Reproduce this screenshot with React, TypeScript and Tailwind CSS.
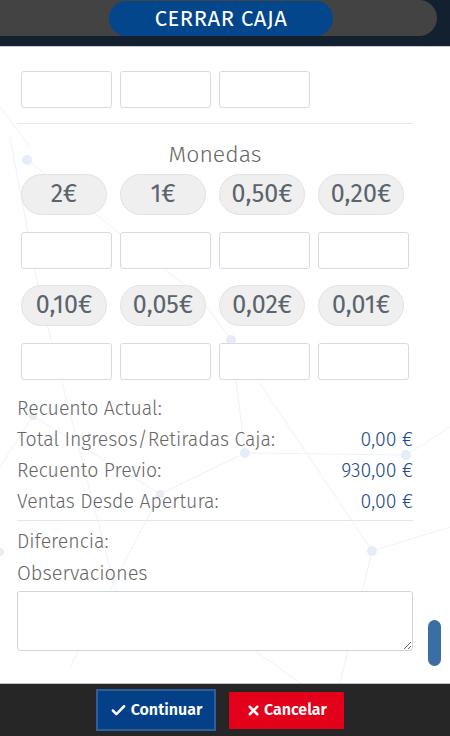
import { Check, X } from "lucide-react"

const font = { fontFamily: "'Fira Sans', Roboto, 'Noto Sans', sans-serif" }

const coinsTop = ["2€", "1€", "0,50€", "0,20€"]
const coinsBottom = ["0,10€", "0,05€", "0,02€", "0,01€"]

const totals = [
  { label: "Recuento Actual:", value: "" },
  { label: "Total Ingresos/Retiradas Caja:", value: "0,00 €" },
  { label: "Recuento Previo:", value: "930,00 €" },
  { label: "Ventas Desde Apertura:", value: "0,00 €" },
]

function Box() {
  return <input className="h-[37px] w-[91px] rounded-[3px] border border-[#d5dbe3] bg-white" />
}

function Pill({ label }: { label: string }) {
  return (
    <div className="flex h-[41px] w-[86px] items-center justify-center rounded-full border border-[#e2e2e2] bg-[#efefef] text-[25px] font-normal text-[#5b636d]">
      {label}
    </div>
  )
}

function Network() {
  // faint decorative background mesh
  return (
    <svg className="pointer-events-none absolute inset-0" width="450" height="636">
      <g stroke="#eef2f7" strokeWidth="1" fill="none">
        <path d="M10 90 L40 250 L120 560 M27 113 L200 250 L231 293 L245 406 L160 447 L70 620" />
        <path d="M231 293 L372 504 L450 480 M245 406 L406 408 L450 380 M372 504 L340 636" />
        <path d="M0 420 L33 369 L160 447 M250 600 L300 636 M30 100 L0 60" />
      </g>
      <g fill="#e6edf6">
        <circle cx="27" cy="113" r="5" />
        <circle cx="231" cy="293" r="5" />
        <circle cx="245" cy="406" r="5" />
        <circle cx="406" cy="408" r="5" />
        <circle cx="372" cy="504" r="5" />
        <circle cx="33" cy="369" r="4" />
        <circle cx="160" cy="447" r="4" />
        <circle cx="0" cy="505" r="4" />
      </g>
    </svg>
  )
}

export default function App() {
  return (
    <div className="flex h-[736px] w-[450px] flex-col overflow-hidden bg-[#13202f]" style={font}>
      <div className="h-[47px] shrink-0 border-b border-[#c9ccd1]">
        <div className="flex h-[36px] w-[437px] items-center rounded-r-full bg-[#434343] pl-[109px]">
          <div className="flex h-[35px] w-[224px] items-center justify-center rounded-full bg-[#03468c] text-[22px] tracking-wide text-white">
            CERRAR CAJA
          </div>
        </div>
      </div>

      <div className="relative flex-1 overflow-hidden bg-white">
        <Network />
        <div className="relative px-[17px] pt-[24px] font-light">
          <div className="flex gap-[8px] pl-[4px]">
            <Box />
            <Box />
            <Box />
          </div>
          <div className="mt-[15px] w-[396px] border-t border-[#e5e7ea]" />
          <div className="mt-[15px] w-[396px] text-center text-[23px] leading-[30px] text-[#666]">Monedas</div>

          <div className="mt-[5px] flex gap-[13px] pl-[4px]">
            {coinsTop.map((c) => (
              <Pill key={c} label={c} />
            ))}
          </div>
          <div className="mt-[17px] flex gap-[8px] pl-[4px]">
            <Box />
            <Box />
            <Box />
            <Box />
          </div>
          <div className="mt-[16px] flex gap-[13px] pl-[4px]">
            {coinsBottom.map((c) => (
              <Pill key={c} label={c} />
            ))}
          </div>
          <div className="mt-[17px] flex gap-[8px] pl-[4px]">
            <Box />
            <Box />
            <Box />
            <Box />
          </div>

          <div className="mt-[13px] w-[396px]">
            {totals.map((t) => (
              <div key={t.label} className="flex h-[31px] items-center justify-between text-[19.5px]">
                <span className="text-[#666]">{t.label}</span>
                <span className="text-[#1d4b8c]">{t.value}</span>
              </div>
            ))}
          </div>
          <div className="mt-[3px] w-[396px] border-t border-[#e5e7ea]" />
          <div className="mt-[5px] flex h-[31px] items-center text-[19.5px] text-[#666]">Diferencia:</div>
          <div className="flex h-[31px] items-center text-[20px] text-[#666]">Observaciones</div>
          <textarea className="mt-[3px] block h-[60px] w-[396px] rounded-[3px] border border-[#cfd5dd] bg-white" />
        </div>

        <div className="absolute left-[428px] top-[573px] h-[46px] w-[13px] rounded-full bg-[#3c6ea6]" />
      </div>

      <div className="flex h-[53px] shrink-0 items-center gap-[13px] border-t border-[#bfc3c8] bg-[#262626] pl-[96px]">
        <button className="flex h-[42px] w-[120px] items-center justify-center gap-[4px] border-2 border-[#2f5f9b] bg-[#034088] text-[16px] font-semibold text-white">
          <Check size={17} strokeWidth={3.5} />
          Continuar
        </button>
        <button className="flex h-[37px] w-[115px] items-center justify-center gap-[3px] bg-[#e2001a] text-[16px] font-semibold text-white">
          <X size={15} strokeWidth={4} />
          Cancelar
        </button>
      </div>
    </div>
  )
}
